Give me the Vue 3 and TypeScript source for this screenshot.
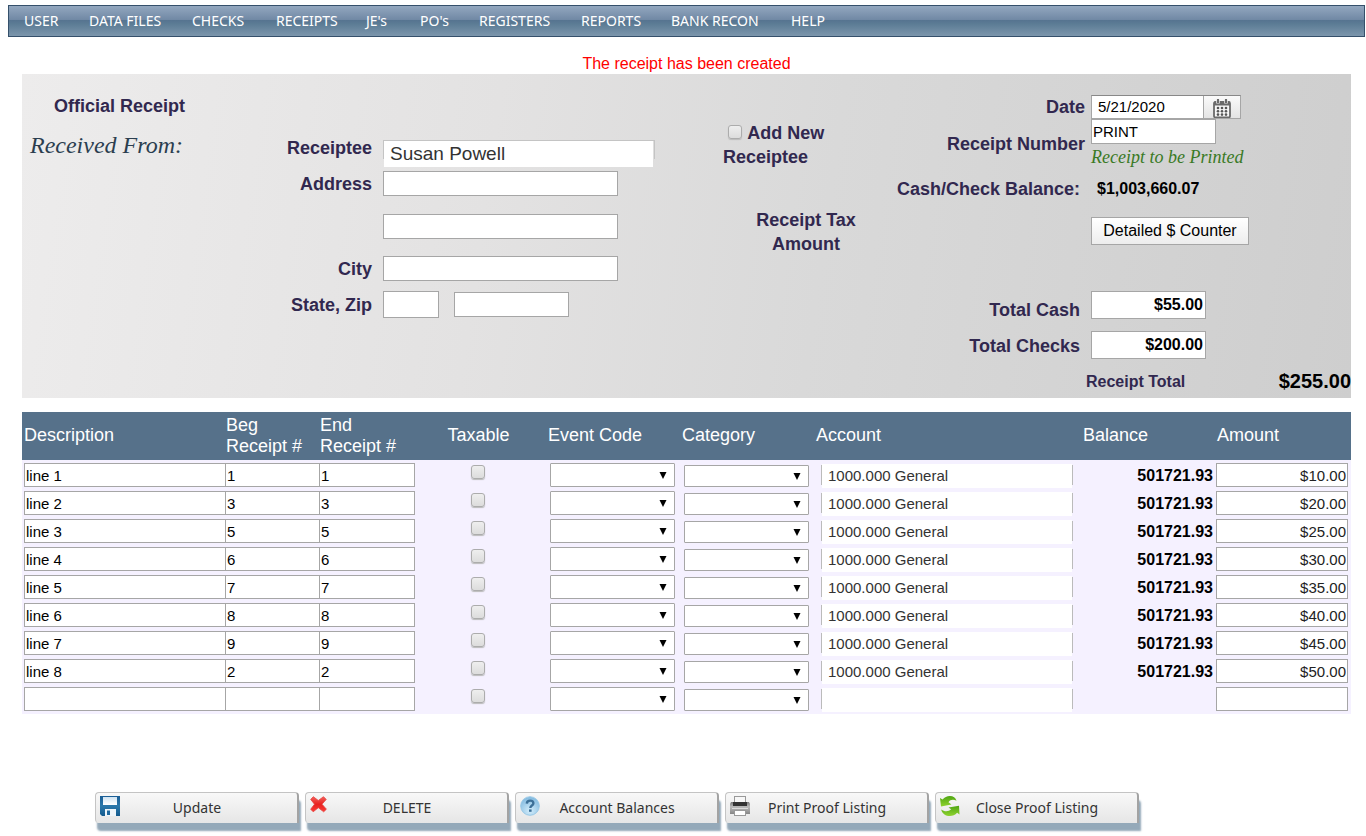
<script setup lang="ts">
import { ref } from 'vue'

interface Line {
  description: string
  beg: string
  end: string
  taxable: boolean
  account: string
  balance: string
  amount: string
}

const menu: string[] = ['USER', 'DATA FILES', 'CHECKS', 'RECEIPTS', "JE's", "PO's", 'REGISTERS', 'REPORTS', 'BANK RECON', 'HELP']

const numbers = ['1', '3', '5', '6', '7', '8', '9', '2']
const amounts = ['$10.00', '$20.00', '$25.00', '$30.00', '$35.00', '$40.00', '$45.00', '$50.00']

const lines = ref<Line[]>([
  ...numbers.map((n, i) => ({
    description: `line ${i + 1}`,
    beg: n,
    end: n,
    taxable: false,
    account: '1000.000 General',
    balance: '501721.93',
    amount: amounts[i],
  })),
  { description: '', beg: '', end: '', taxable: false, account: '', balance: '', amount: '' },
])

const receiptee = ref('Susan Powell')
const date = ref('5/21/2020')
const receiptNumber = ref('PRINT')
const totalCash = ref('$55.00')
const totalChecks = ref('$200.00')
</script>

<template>
  <div class="page">
    <nav class="menu">
      <a v-for="item in menu" :key="item" href="#">{{ item }}</a>
    </nav>

    <p class="message">The receipt has been created</p>

    <form class="panel" @submit.prevent>
      <div class="heading">
        <h1>Official Receipt</h1>
        <h2>Received From:</h2>
      </div>

      <div class="payer">
        <label for="receiptee">Receiptee</label>
        <div class="combo"><input id="receiptee" v-model="receiptee" type="text" /></div>
        <label for="address1">Address</label>
        <input id="address1" class="box wide" type="text" />
        <span></span>
        <input class="box wide" type="text" aria-label="Address line 2" />
        <label for="city">City</label>
        <input id="city" class="box wide" type="text" />
        <label for="state">State, Zip</label>
        <div class="statezip">
          <input id="state" class="box state" type="text" />
          <input class="box zip" type="text" aria-label="Zip" />
        </div>
      </div>

      <div class="middle">
        <label class="addnew"><input type="checkbox" class="check" /> Add New Receiptee</label>
        <p class="tax">Receipt Tax Amount</p>
      </div>

      <div class="summary">
        <div class="pair date-row">
          <label for="date" class="near">Date</label>
          <div class="date">
            <input id="date" v-model="date" type="text" />
            <button type="button" aria-label="Open calendar">
              <svg width="18" height="19" viewBox="0 0 18 19">
                <rect x="1" y="3" width="16" height="15.5" rx="1.5" fill="#f6f6f6" stroke="#6a6a6a" stroke-width="1.8" />
                <path d="M1 2.5h16v4H1z" fill="#6a6a6a" />
                <path d="M5 .5v4M13 .5v4" stroke="#e4e4e4" stroke-width="3.6" />
                <path d="M5 0v4M13 0v4" stroke="#6a6a6a" stroke-width="2" />
                <g fill="#555">
                  <circle cx="5" cy="9" r="1.3" /><circle cx="9" cy="9" r="1.3" /><circle cx="13" cy="9" r="1.3" />
                  <circle cx="5" cy="12.3" r="1.3" /><circle cx="9" cy="12.3" r="1.3" /><circle cx="13" cy="12.3" r="1.3" />
                  <circle cx="5" cy="15.6" r="1.3" /><circle cx="9" cy="15.6" r="1.3" /><circle cx="13" cy="15.6" r="1.3" />
                </g>
              </svg>
            </button>
          </div>
        </div>
        <div class="pair number-row">
          <label for="number" class="near">Receipt Number</label>
          <div>
            <input id="number" v-model="receiptNumber" class="box number" type="text" />
            <div class="status">Receipt to be Printed</div>
          </div>
        </div>
        <div class="pair balance-row">
          <span class="caption">Cash/Check Balance:</span>
          <strong class="balance">$1,003,660.07</strong>
        </div>
        <div class="pair counter-row">
          <span></span>
          <button type="button" class="counter">Detailed $ Counter</button>
        </div>
        <div class="pair total-row first">
          <label for="cash">Total Cash</label>
          <input id="cash" v-model="totalCash" class="box total" type="text" />
        </div>
        <div class="pair total-row">
          <label for="checks">Total Checks</label>
          <input id="checks" v-model="totalChecks" class="box total" type="text" />
        </div>
        <div class="grand">
          <span>Receipt Total</span>
          <strong>$255.00</strong>
        </div>
      </div>
    </form>

    <table class="lines">
      <colgroup>
        <col class="c-desc" /><col class="c-beg" /><col class="c-end" /><col class="c-tax" /><col class="c-event" />
        <col class="c-cat" /><col class="c-acct" /><col class="c-bal" /><col class="c-amt" />
      </colgroup>
      <thead>
        <tr>
          <th class="desc">Description</th>
          <th>Beg<br />Receipt #</th>
          <th>End<br />Receipt #</th>
          <th class="taxable">Taxable</th>
          <th class="event">Event Code</th>
          <th>Category</th>
          <th>Account</th>
          <th>Balance</th>
          <th>Amount</th>
        </tr>
      </thead>
      <tbody>
        <tr v-for="(line, i) in lines" :key="i">
          <td class="desc"><input v-model="line.description" class="cell open" type="text" :aria-label="`Description ${i + 1}`" /></td>
          <td><input v-model="line.beg" class="cell open" type="text" :aria-label="`Beginning receipt ${i + 1}`" /></td>
          <td><input v-model="line.end" class="cell" type="text" :aria-label="`Ending receipt ${i + 1}`" /></td>
          <td class="taxable"><input v-model="line.taxable" type="checkbox" class="check" :aria-label="`Taxable ${i + 1}`" /></td>
          <td class="event">
            <span class="pick">
              <select :aria-label="`Event code ${i + 1}`"><option></option></select>
              <svg width="8" height="7" viewBox="0 0 8 7"><path d="M0.5 0h7L4 7z" fill="#000" /></svg>
            </span>
          </td>
          <td class="category">
            <span class="pick low">
              <select :aria-label="`Category ${i + 1}`"><option></option></select>
              <svg width="8" height="7" viewBox="0 0 8 7"><path d="M0.5 0h7L4 7z" fill="#000" /></svg>
            </span>
          </td>
          <td class="account"><div class="acct"><input v-model="line.account" type="text" :aria-label="`Account ${i + 1}`" /></div></td>
          <td class="bal">{{ line.balance }}</td>
          <td class="amt"><input v-model="line.amount" class="cell" type="text" :aria-label="`Amount ${i + 1}`" /></td>
        </tr>
      </tbody>
    </table>

    <div class="actions">
      <button type="button">
        <svg width="20" height="20" viewBox="0 0 20 20">
          <defs>
            <linearGradient id="disk" x2="0" y2="1"><stop offset="0" stop-color="#1a5d94" /><stop offset="0.5" stop-color="#2a78ab" /><stop offset="1" stop-color="#145a8d" /></linearGradient>
            <linearGradient id="paper" x2="0" y2="1"><stop offset="0" stop-color="#cfe3f2" /><stop offset="1" stop-color="#fff" /></linearGradient>
          </defs>
          <path d="M0 0h20v20H2l-2-2z" fill="url(#disk)" />
          <rect x="3" y="1" width="14" height="8" fill="url(#paper)" />
          <path d="M5 13h11v7H5z" fill="#eef5fa" />
          <path d="M7 14.5h3V19H7z" fill="#1f699e" />
        </svg>
        <span>Update</span>
      </button>
      <button type="button">
        <svg width="20" height="20" viewBox="0 0 20 20">
          <defs><linearGradient id="cross" x2="0" y2="1"><stop offset="0" stop-color="#f4605c" /><stop offset="0.5" stop-color="#e8221f" /><stop offset="1" stop-color="#fb3c38" /></linearGradient></defs>
          <path d="M3.3 .7 8.3 4.5 13.5.7 16.2 3.4 12 8.2l4.4 5-2.7 2.6-5.4-4.1-5.1 4.1L.7 13.2l3.8-5-3.8-4.8z" fill="url(#cross)" stroke="#e4423f" stroke-width=".8" stroke-linejoin="round" />
        </svg>
        <span>DELETE</span>
      </button>
      <button type="button">
        <svg width="20" height="20" viewBox="0 0 20 20">
          <defs><radialGradient id="ball" cx=".5" cy=".75" r=".7"><stop offset="0" stop-color="#d3edfb" /><stop offset="1" stop-color="#84bbe0" /></radialGradient></defs>
          <circle cx="10" cy="10" r="9.3" fill="url(#ball)" stroke="#9ac9e6" stroke-width="1" />
          <path d="M6.8 7.6c.1-2 1.5-3 3.4-3 1.9 0 3.2 1 3.2 2.6 0 2.4-3.1 2.3-3.1 4.8" fill="none" stroke="#3c7098" stroke-width="2.4" />
          <rect x="9" y="13.4" width="2.6" height="2.4" fill="#3c7098" />
        </svg>
        <span>Account Balances</span>
      </button>
      <button type="button">
        <svg width="20" height="20" viewBox="0 0 20 20">
          <defs><linearGradient id="body" x2="0" y2="1"><stop offset="0" stop-color="#777" /><stop offset="0.4" stop-color="#bbb" /><stop offset="1" stop-color="#858585" /></linearGradient></defs>
          <rect x="4.5" y=".5" width="11" height="8" fill="#f7f7f7" stroke="#999" />
          <path d="M1 6h3v2h12V6h3l1 2v10h-4v-2H4v2H0V8z" fill="url(#body)" />
          <path d="M3 6h14v4H3z" fill="#333" />
          <path d="M2 12.5h16" stroke="#ddd" />
          <rect x="4.5" y="14.5" width="11" height="5" fill="#fff" stroke="#999" />
        </svg>
        <span>Print Proof Listing</span>
      </button>
      <button type="button">
        <svg width="20" height="20" viewBox="0 0 20 20">
          <defs><linearGradient id="leaf" x2="0" y2="1"><stop offset="0" stop-color="#4fa512" /><stop offset="1" stop-color="#8fd32f" /></linearGradient></defs>
          <path d="M0 2l2.6 1.6C4.5 1.2 7 0 9.8 0c3.4 0 6 1.6 6.7 4.8-3-1.6-6.3-1.3-8 1.5L11.5 8.5 1 10.5z" fill="url(#leaf)" />
          <path d="M19.5 18.5l-2.4-1.7C15.2 19 12.6 20 9.8 20 6 20 2.3 18.2 1.2 13.5c3.2 2.4 7.6 2.3 10-.2L8.5 11.5 19 9.8z" fill="url(#leaf)" />
        </svg>
        <span>Close Proof Listing</span>
      </button>
    </div>
  </div>
</template>

<style>
body {
  margin: 0;
  background: #fff;
}
</style>

<style scoped>
.page {
  padding: 5px 0 0;
  font-family: "Liberation Sans", Arial, sans-serif;
  font-size: 18px;
}
.page * {
  box-sizing: border-box;
}
input,
select,
button {
  margin: 0;
  border-radius: 0;
  font-family: inherit;
  color: #000;
}

.menu {
  display: grid;
  grid-template-columns: 65px 103px 84px 90px 54px 59px 102px 90px 120px 1fr;
  align-items: center;
  height: 32px;
  margin: 0 1px 0 8px;
  padding: 0 0 2px 15px;
  border: 1px solid #35506b;
  background: linear-gradient(#93a7bf 0%, #7189a5 45%, #567490 48%, #5c7c95 60%, #7c96ac 100%);
}
.menu a {
  color: #fff;
  font-family: "Noto Sans", "Open Sans", sans-serif;
  font-size: 14px;
  text-decoration: none;
  white-space: nowrap;
}

.message {
  margin: 16px 0 0 7px;
  height: 21px;
  line-height: 21px;
  font-size: 16px;
  text-align: center;
  color: #f00;
}

.panel {
  display: grid;
  grid-template-columns: 228fr 411fr 240fr 450fr;
  margin: 0 15px 0 22px;
  background: linear-gradient(98deg, #edecec 0%, #e3e2e2 35%, #d9d9d9 60%, #cecece 100%);
  color: #31284f;
  font-weight: bold;
}
.heading h1 {
  margin: 20px 0 0 32px;
  font-size: 18px;
  line-height: 24px;
}
.heading h2 {
  margin: 12px 0 0 8px;
  font: italic 24px/30px "Liberation Serif", serif;
  color: #2b3e4f;
  white-space: nowrap;
}

.payer {
  display: grid;
  grid-template-columns: 122px 1fr;
  grid-template-rows: 35px 36px 50px 35px 36px;
  column-gap: 11px;
  align-content: start;
  align-items: center;
  padding-top: 56px;
}
.payer > label {
  padding-top: 2px;
  text-align: right;
}
.box {
  border: 1px solid #a6a6a6;
  background: #fff;
  height: 25px;
  padding: 0 1px;
  font-size: 15px;
}
.wide {
  width: 235px;
}
.combo {
  width: 272px;
  height: 19px;
  margin-top: 4px;
  border: 1px solid #c4c4c4;
  border-bottom: 0;
}
.combo input {
  display: block;
  width: 269px;
  height: 26px;
  padding: 0 6px;
  border: 0;
  background: #fff;
  color: #333;
  font-size: 19px;
}
.statezip {
  display: flex;
  align-items: center;
  gap: 15px;
}
.state {
  width: 56px;
  height: 27px;
}
.zip {
  width: 115px;
}

.check {
  appearance: none;
  width: 14px;
  height: 14px;
  border: 1px solid #acacac;
  border-radius: 3px;
  background: linear-gradient(#eee, #dcdcdc);
  box-shadow: 0 1px 1px #bbb;
}
.middle {
  padding: 47px 0 0 62px;
  line-height: 24px;
}
.addnew {
  display: block;
  width: 120px;
}
.addnew .check {
  margin: 0 1px 0 5px;
}
.tax {
  width: 120px;
  margin: 39px 0 0 23px;
  text-align: center;
}

.summary {
  padding-top: 21px;
}
.pair {
  display: grid;
  grid-template-columns: 190px 1fr;
  align-items: center;
}
.pair > label,
.caption {
  justify-self: end;
  padding-right: 11px;
  text-align: right;
  white-space: nowrap;
}
.pair > .near {
  padding-right: 6px;
}
.date-row {
  height: 24px;
}
.date {
  display: flex;
  width: 150px;
  height: 24px;
  border: 1px solid #a6a6a6;
  border-top-color: #888;
}
.date input {
  width: 112px;
  padding: 0 6px 2px;
  border: 0;
  border-right: 1px solid #a6a6a6;
  background: #fff;
  font-size: 15px;
}
.date button {
  flex: 1;
  display: flex;
  justify-content: center;
  align-items: flex-end;
  padding: 0;
  border: 0;
  background: linear-gradient(#fafafa, #e4e4e4);
}
.number-row {
  height: 51px;
}
.number {
  display: block;
  width: 125px;
}
.status {
  height: 26px;
  line-height: 26px;
  font-family: "Liberation Serif", serif;
  font-size: 18px;
  font-style: italic;
  font-weight: normal;
  color: #3a7a25;
  white-space: nowrap;
}
.balance-row {
  height: 38px;
}
.balance {
  padding-left: 6px;
  font-size: 16px;
  color: #000;
}
.counter-row {
  height: 46px;
}
.counter {
  width: 158px;
  height: 28px;
  padding: 0;
  border: 1px solid #a6a6a6;
  background: linear-gradient(#fff, #ededed);
  font-size: 16px;
  white-space: nowrap;
}
.total-row {
  height: 40px;
}
.total-row.first {
  margin-top: 31px;
}
.total-row label {
  padding-top: 2px;
}
.total-row.first label {
  padding-top: 10px;
}
.total {
  width: 115px;
  height: 28px;
  padding: 0 2px;
  font-size: 16px;
  font-weight: bold;
  text-align: right;
}
.grand {
  display: flex;
  align-items: center;
  justify-content: space-between;
  height: 33px;
  padding-left: 185px;
  font-size: 16px;
}
.grand strong {
  font-size: 20px;
  color: #000;
}

.lines {
  table-layout: fixed;
  width: calc(100% - 37px);
  margin: 14px 15px 0 22px;
  padding-bottom: 1px;
  border-spacing: 0;
  background: #f5f1ff;
  font-size: 15px;
}
.c-desc { width: 203px; }
.c-beg { width: 94px; }
.c-end { width: 96px; }
.c-tax { width: 126px; }
.c-event { width: 140px; }
.c-cat { width: 134px; }
.c-acct { width: 267px; }
.c-bal { width: 134px; }
.c-amt { width: 135px; }
th {
  height: 49px;
  padding: 0 0 1px 1px;
  border-bottom: 1px solid #f5f1ff;
  background: #56718a;
  background-clip: padding-box;
  color: #fff;
  font-size: 18px;
  font-weight: normal;
  line-height: 21px;
  text-align: left;
}
td {
  height: 28px;
  padding: 2px 0;
  vertical-align: top;
}
.desc {
  padding-left: 2px;
}
.cell {
  display: block;
  width: 100%;
  height: 24px;
  padding: 0 1px;
  border: 1px solid #a6a6a6;
  background: #fff;
  font-size: 15px;
}
.open {
  border-right: 0;
}
.taxable {
  text-align: center;
}
td.taxable {
  padding-top: 4px;
}
td.taxable .check {
  display: block;
  margin: 0 auto;
}
th.event {
  padding-left: 7px;
}
td.event {
  padding-left: 9px;
}
td.category {
  padding: 4px 0 0 3px;
}
.pick {
  display: grid;
  align-items: center;
  width: 125px;
  height: 24px;
}
.pick.low {
  height: 22px;
}
.pick select {
  grid-area: 1 / 1;
  appearance: none;
  width: 100%;
  height: 100%;
  border: 1px solid #a6a6a6;
  border-radius: 1px;
  background: #fff;
}
.pick svg {
  grid-area: 1 / 1;
  justify-self: end;
  margin-right: 8px;
  pointer-events: none;
}
td.account {
  padding: 4px 0 0 6px;
}
.acct {
  display: flex;
  align-items: flex-start;
  width: 252px;
  height: 20px;
  border: solid #bbb;
  border-width: 0 1px;
}
.acct input {
  width: 100%;
  height: 24px;
  margin-top: -1px;
  padding: 0 6px 2px;
  border: 0;
  background: #fff;
  color: #333;
  font-size: 15px;
}
td.bal {
  padding: 3px 3px 0 0;
  font-size: 16px;
  font-weight: bold;
  line-height: 24px;
  text-align: right;
}
td.amt {
  padding-right: 3px;
}
.amt .cell {
  text-align: right;
  color: #222;
}

.actions {
  display: flex;
  gap: 6px;
  margin-top: 78px;
  padding: 0 0 13px 95px;
}
.actions button {
  display: flex;
  align-items: flex-start;
  width: 204px;
  height: 31px;
  padding: 3px 23px 0 4px;
  border: 1px solid #c4c4c4;
  border-right: 2px solid #a3a3a3;
  border-bottom: 0;
  border-radius: 4px 4px 0 4px;
  background: linear-gradient(#f8f8f8, #e6e6e6);
  box-shadow: 2px 8px 2px #94a9b9;
  color: #333;
  font-family: "Noto Sans", "Open Sans", sans-serif;
  font-size: 14px;
  line-height: 24px;
}
.actions svg {
  flex: none;
}
.actions span {
  flex: 1;
  text-align: center;
  white-space: nowrap;
}
</style>
